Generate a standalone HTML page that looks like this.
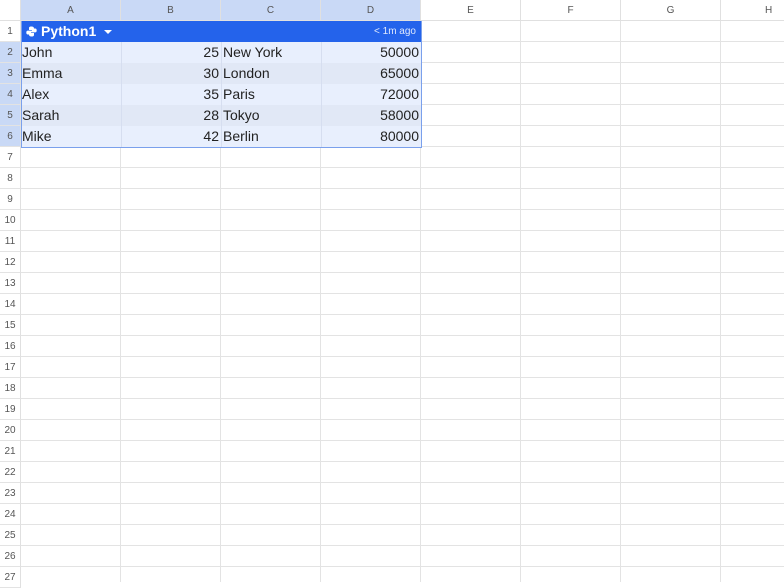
<!DOCTYPE html>
<html><head><style>
*{margin:0;padding:0;box-sizing:border-box}
body{width:784px;height:582px;overflow:hidden;background:#fff;font-family:"Liberation Sans",sans-serif;position:relative}
.grid{position:absolute;left:20px;top:20px;width:764px;height:562px;
background-image:repeating-linear-gradient(to right,#e3e3e3 0 1px,transparent 1px 100px),repeating-linear-gradient(to bottom,#e3e3e3 0 1px,transparent 1px 21px);}
.ch{position:absolute;top:0;height:21px;width:100px;font-size:10px;color:#555;text-align:center;line-height:21px;border-right:1px solid #e0e0e0;border-bottom:1px solid #e0e0e0}
.rh{position:absolute;left:0;width:21px;height:21px;font-size:10px;color:#555;text-align:center;line-height:21px;border-bottom:1px solid #e3e3e3;border-right:1px solid #e0e0e0}
.sel{background:#c9d9f6}
.row{position:absolute;left:21px;width:400px;height:21px;font-size:14px;color:#222;line-height:21px}
.row span{position:absolute;top:0}
</style></head><body>
<div class="grid"></div>
<div style="position:absolute;left:0;top:0;width:21px;height:21px;border-right:1px solid #e0e0e0;border-bottom:1px solid #e0e0e0;background:#fff"></div>
<div class="ch sel" style="left:21px">A</div>
<div class="ch sel" style="left:121px">B</div>
<div class="ch sel" style="left:221px">C</div>
<div class="ch sel" style="left:321px">D</div>
<div class="ch" style="left:421px;background:#fff">E</div>
<div class="ch" style="left:521px;background:#fff">F</div>
<div class="ch" style="left:621px;background:#fff">G</div>
<div class="ch" style="left:721px;background:#fff;width:100px;text-align:left;padding-left:44px">H</div>

<div class="rh" style="top:21px;background:#fff">1</div>
<div class="rh sel" style="top:42px">2</div>
<div class="rh sel" style="top:63px">3</div>
<div class="rh sel" style="top:84px">4</div>
<div class="rh sel" style="top:105px">5</div>
<div class="rh sel" style="top:126px">6</div>
<div class="rh" style="top:147px">7</div>
<div class="rh" style="top:168px">8</div>
<div class="rh" style="top:189px">9</div>
<div class="rh" style="top:210px">10</div>
<div class="rh" style="top:231px">11</div>
<div class="rh" style="top:252px">12</div>
<div class="rh" style="top:273px">13</div>
<div class="rh" style="top:294px">14</div>
<div class="rh" style="top:315px">15</div>
<div class="rh" style="top:336px">16</div>
<div class="rh" style="top:357px">17</div>
<div class="rh" style="top:378px">18</div>
<div class="rh" style="top:399px">19</div>
<div class="rh" style="top:420px">20</div>
<div class="rh" style="top:441px">21</div>
<div class="rh" style="top:462px">22</div>
<div class="rh" style="top:483px">23</div>
<div class="rh" style="top:504px">24</div>
<div class="rh" style="top:525px">25</div>
<div class="rh" style="top:546px">26</div>
<div class="rh" style="top:567px">27</div>

<div style="position:absolute;left:21px;top:21px;width:401px;height:21px;background:#2463eb;color:#fff;line-height:21px">
 <svg style="position:absolute;left:5px;top:5px" width="11" height="11" viewBox="0 0 11 11"><path d="M5.5 0.5C3 0.5 3 1.5 3 2.5V4H6V4.6H1.8C0.8 4.6 0.3 5.3 0.3 6.5S0.8 8.5 1.8 8.5H3V7C3 6 3.7 5.5 4.6 5.5H7C7.8 5.5 8 5 8 4.3V2.5C8 1.3 7.2 0.5 5.5 0.5Z" fill="#fff"/><path d="M5.5 10.5C8 10.5 8 9.5 8 8.5V7H5V6.4H9.2C10.2 6.4 10.7 5.7 10.7 4.5S10.2 2.5 9.2 2.5H8V4C8 5 7.3 5.5 6.4 5.5H4C3.2 5.5 3 6 3 6.7V8.5C3 9.7 3.8 10.5 5.5 10.5Z" fill="#fff"/></svg>
 <span style="position:absolute;left:20px;font-size:14px;font-weight:bold">Python1</span>
 <svg style="position:absolute;left:83px;top:9px" width="8" height="4"><path d="M0 0H8L4 4Z" fill="#fff"/></svg>
 <span style="position:absolute;right:6px;font-size:10px;color:#dfe8fd">&lt; 1m ago</span>
</div>

<div class="row" style="top:42px;background:#e8effd"><span style="left:1px">John</span><span style="left:100px;width:98px;text-align:right">25</span><span style="left:202px">New York</span><span style="right:2px">50000</span></div>
<div class="row" style="top:63px;background:#e1e8f6"><span style="left:1px">Emma</span><span style="left:100px;width:98px;text-align:right">30</span><span style="left:202px">London</span><span style="right:2px">65000</span></div>
<div class="row" style="top:84px;background:#e8effd"><span style="left:1px">Alex</span><span style="left:100px;width:98px;text-align:right">35</span><span style="left:202px">Paris</span><span style="right:2px">72000</span></div>
<div class="row" style="top:105px;background:#e1e8f6"><span style="left:1px">Sarah</span><span style="left:100px;width:98px;text-align:right">28</span><span style="left:202px">Tokyo</span><span style="right:2px">58000</span></div>
<div class="row" style="top:126px;background:#e8effd"><span style="left:1px">Mike</span><span style="left:100px;width:98px;text-align:right">42</span><span style="left:202px">Berlin</span><span style="right:2px">80000</span></div>
<div style="position:absolute;left:121px;top:42px;width:1px;height:105px;background:#d6def0"></div>
<div style="position:absolute;left:221px;top:42px;width:1px;height:105px;background:#d6def0"></div>
<div style="position:absolute;left:321px;top:42px;width:1px;height:105px;background:#d6def0"></div>
<div style="position:absolute;left:21px;top:21px;width:401px;height:127px;border:1px solid #7aa0ec;border-top:none"></div>
</body></html>
